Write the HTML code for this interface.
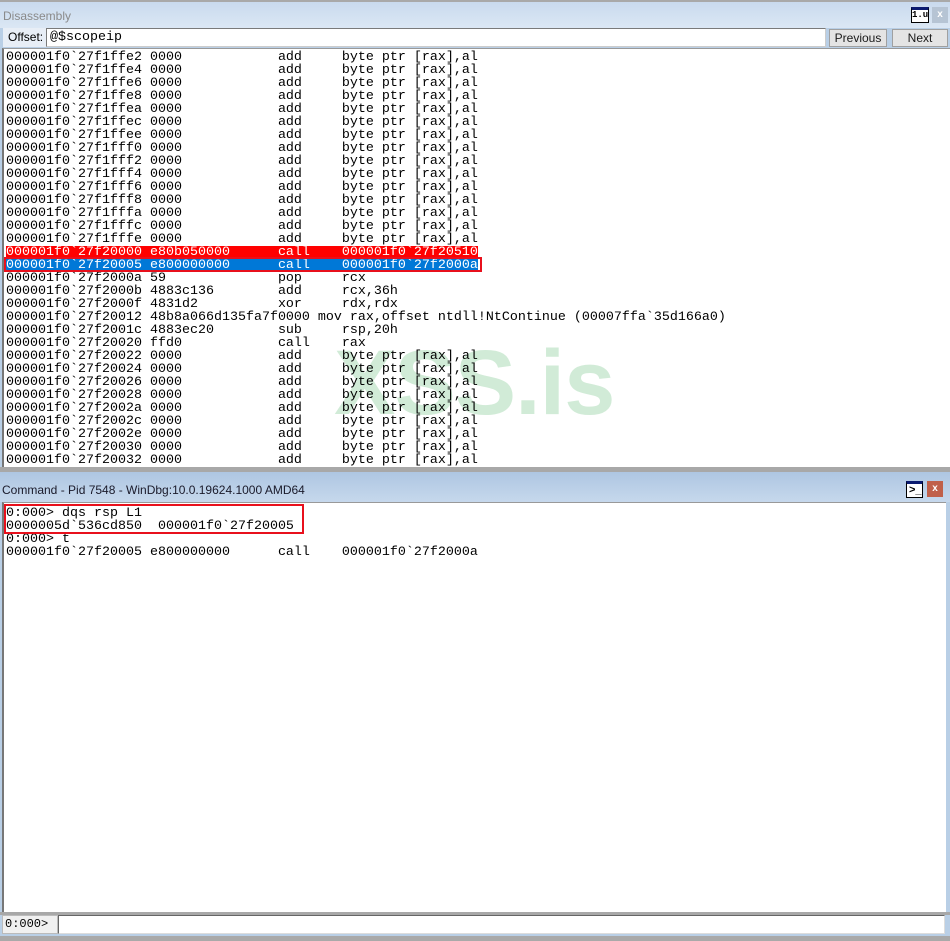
<!DOCTYPE html>
<html><head><meta charset="utf-8"><style>
*{margin:0;padding:0;box-sizing:border-box}
body{width:950px;height:941px;overflow:hidden;background:#b9cfe6;font-family:"Liberation Sans",sans-serif;position:relative}
.abs{position:absolute}
.bar{background:linear-gradient(#c9daee,#dbe7f4);}
.mono{font-family:"Liberation Mono",monospace;font-size:13.33px;line-height:13px;white-space:pre;color:#000}
.btn{position:absolute;top:29px;height:18px;background:#e4e4e4;border:1px solid #a0a0a0;font-size:12px;line-height:16px;text-align:center;color:#1a1a1a}
</style></head><body>
<div class="abs" style="left:0;top:0;width:950px;height:2px;background:#a9a9a9"></div>
<div class="abs bar" style="left:0;top:2px;width:950px;height:26px"></div>
<div class="abs" style="left:3px;top:9px;font-size:12px;color:#8a8a8a">Disassembly</div>
<div class="abs" style="left:911px;top:7px;width:18px;height:16px;border:1px solid #000;border-top:3px solid #0a1a70;background:#fff;font-family:'Liberation Mono';font-size:9px;line-height:10px;text-align:center;font-weight:bold">1.u</div>
<div class="abs" style="left:932px;top:7px;width:16px;height:16px;background:#b6c4d4;color:#fff;font-size:10px;text-align:center;line-height:15px;font-weight:bold">x</div>
<div class="abs" style="left:3px;top:28px;width:43px;height:19px;background:#e8eef6;font-size:12px;line-height:18px;padding-left:5px">Offset:</div>
<div class="abs" style="left:46px;top:28px;width:780px;height:19px;background:#fff;border:1px solid #7a7a7a;border-right-color:#ccc;border-bottom-color:#ccc;font-family:'Liberation Mono';font-size:13.33px;line-height:17px;padding-left:3px">@$scopeip</div>
<div class="btn" style="left:829px;width:58px">Previous</div>
<div class="btn" style="left:892px;width:56px">Next</div>
<div class="abs" style="left:2px;top:48px;width:948px;height:419px;background:#fff;border-left:2px solid #777;border-top:1px solid #999;overflow:hidden">
<div class="abs" style="left:330px;top:288px;font-family:'Liberation Sans';font-weight:bold;font-size:92px;line-height:92px;color:rgba(140,205,155,0.4);letter-spacing:-1px">XSS.is</div>
<div class="mono abs" style="left:2px;top:2px">000001f0`27f1ffe2 0000            add     byte ptr [rax],al
000001f0`27f1ffe4 0000            add     byte ptr [rax],al
000001f0`27f1ffe6 0000            add     byte ptr [rax],al
000001f0`27f1ffe8 0000            add     byte ptr [rax],al
000001f0`27f1ffea 0000            add     byte ptr [rax],al
000001f0`27f1ffec 0000            add     byte ptr [rax],al
000001f0`27f1ffee 0000            add     byte ptr [rax],al
000001f0`27f1fff0 0000            add     byte ptr [rax],al
000001f0`27f1fff2 0000            add     byte ptr [rax],al
000001f0`27f1fff4 0000            add     byte ptr [rax],al
000001f0`27f1fff6 0000            add     byte ptr [rax],al
000001f0`27f1fff8 0000            add     byte ptr [rax],al
000001f0`27f1fffa 0000            add     byte ptr [rax],al
000001f0`27f1fffc 0000            add     byte ptr [rax],al
000001f0`27f1fffe 0000            add     byte ptr [rax],al
<span style="background:#f00;color:#fff;display:inline-block;width:472px">000001f0`27f20000 e80b050000      call    000001f0`27f20510</span>
<span style="background:#0078d7;color:#fff;display:inline-block;width:472px">000001f0`27f20005 e800000000      call    000001f0`27f2000a</span>
000001f0`27f2000a 59              pop     rcx
000001f0`27f2000b 4883c136        add     rcx,36h
000001f0`27f2000f 4831d2          xor     rdx,rdx
000001f0`27f20012 48b8a066d135fa7f0000 mov rax,offset ntdll!NtContinue (00007ffa`35d166a0)
000001f0`27f2001c 4883ec20        sub     rsp,20h
000001f0`27f20020 ffd0            call    rax
000001f0`27f20022 0000            add     byte ptr [rax],al
000001f0`27f20024 0000            add     byte ptr [rax],al
000001f0`27f20026 0000            add     byte ptr [rax],al
000001f0`27f20028 0000            add     byte ptr [rax],al
000001f0`27f2002a 0000            add     byte ptr [rax],al
000001f0`27f2002c 0000            add     byte ptr [rax],al
000001f0`27f2002e 0000            add     byte ptr [rax],al
000001f0`27f20030 0000            add     byte ptr [rax],al
000001f0`27f20032 0000            add     byte ptr [rax],al</div>
<div class="abs" style="left:0px;top:208px;width:478px;height:15px;border:2px solid #e8101c"></div>
</div>
<div class="abs" style="left:0;top:467px;width:950px;height:5px;background:#a8a8a8"></div>
<div class="abs bar" style="left:0;top:472px;width:950px;height:30px;background:linear-gradient(#aec6e2,#c6d8ec)"></div>
<div class="abs" style="left:2px;top:483px;font-size:12px;color:#1a1a2a">Command - Pid 7548 - WinDbg:10.0.19624.1000 AMD64</div>
<div class="abs" style="left:906px;top:481px;width:17px;height:17px;border:1px solid #000;border-top:3px solid #0a1a70;background:#fff;font-size:11px;font-weight:bold;line-height:12px;padding-left:2px">&gt;_</div>
<div class="abs" style="left:927px;top:481px;width:16px;height:16px;background:#c0604a;color:#fff;font-size:10px;text-align:center;line-height:15px;font-weight:bold">x</div>
<div class="abs" style="left:2px;top:502px;width:944px;height:410px;background:#fff;border-left:2px solid #777;border-top:1px solid #999">
<div class="mono abs" style="left:2px;top:4px">0:000&gt; dqs rsp L1
0000005d`536cd850  000001f0`27f20005
0:000&gt; t
000001f0`27f20005 e800000000      call    000001f0`27f2000a</div>
<div class="abs" style="left:0px;top:1px;width:300px;height:30px;border:2px solid #e8101c"></div>
</div>
<div class="abs" style="left:0;top:912px;width:950px;height:3px;background:#a8a8a8"></div>
<div class="abs" style="left:2px;top:915px;width:56px;height:19px;background:#f0f0f0;border:1px solid #bbb;font-family:'Liberation Mono';font-size:12px;line-height:17px;padding-left:2px">0:000&gt;</div>
<div class="abs" style="left:58px;top:915px;width:887px;height:19px;background:#fff;border:1px solid #666;border-right-color:#ddd;border-bottom-color:#ddd"></div>
<div class="abs" style="left:0;top:936px;width:950px;height:5px;background:#a9a9a9"></div>
</body></html>
